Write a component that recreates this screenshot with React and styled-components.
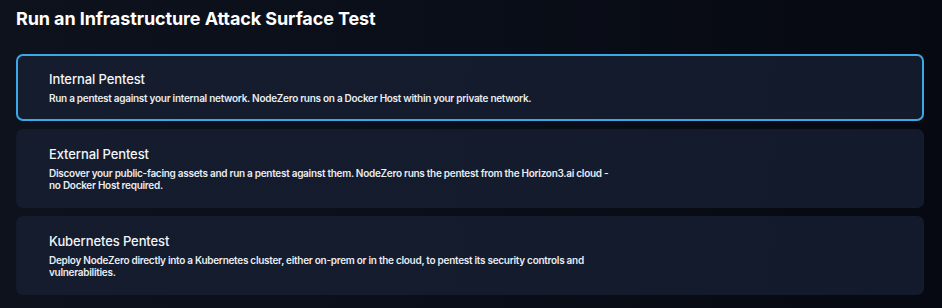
import React from "react";
import styled, { createGlobalStyle } from "styled-components";

const Global = createGlobalStyle`
  html, body { margin: 0; padding: 0; }
  body {
    background: #080c15;
    font-family: Inter, "Noto Sans", sans-serif;
    -webkit-font-smoothing: antialiased;
  }
`;

const Page = styled.div`
  width: 942px;
  height: 308px;
  box-sizing: border-box;
  padding: 7px 18px 0 16px;
  background: linear-gradient(90deg, #0d121d 0%, #0a0e18 50%, #060911 100%);
  overflow: hidden;
`;

const Heading = styled.h1`
  margin: 0;
  font-size: 18px;
  line-height: 23px;
  font-weight: 700;
  color: #ffffff;
  letter-spacing: -0.1px;
`;

const List = styled.div`
  margin-top: 24px;
  display: flex;
  flex-direction: column;
  gap: 8px;
`;

const Card = styled.div`
  box-sizing: border-box;
  border-radius: 7px;
  border: 2px solid ${(p) => (p.$selected ? "#3ba9e6" : "transparent")};
  background: linear-gradient(100deg, #141c2d 0%, #131b2d 60%, #121a2c 100%);
  padding: 15px 31px 14px;
  cursor: pointer;
`;

const Title = styled.div`
  font-size: 13px;
  line-height: 16px;
  font-weight: 500;
  color: #f3f5f8;
  letter-spacing: -0.1px;
`;

const Desc = styled.div`
  margin-top: 5px;
  max-width: 570px;
  font-size: 10px;
  line-height: 12.5px;
  font-weight: 600;
  color: #e9ecf1;
  letter-spacing: -0.28px;
`;

const items = [
  {
    title: "Internal Pentest",
    desc: "Run a pentest against your internal network. NodeZero runs on a Docker Host within your private network.",
    selected: true,
  },
  {
    title: "External Pentest",
    desc: "Discover your public-facing assets and run a pentest against them. NodeZero runs the pentest from the Horizon3.ai cloud - no Docker Host required.",
  },
  {
    title: "Kubernetes Pentest",
    desc: "Deploy NodeZero directly into a Kubernetes cluster, either on-prem or in the cloud, to pentest its security controls and vulnerabilities.",
  },
];

export default function App() {
  return (
    <>
      <Global />
      <Page>
        <Heading>Run an Infrastructure Attack Surface Test</Heading>
        <List>
          {items.map((it) => (
            <Card key={it.title} $selected={it.selected}>
              <Title>{it.title}</Title>
              <Desc>{it.desc}</Desc>
            </Card>
          ))}
        </List>
      </Page>
    </>
  );
}
